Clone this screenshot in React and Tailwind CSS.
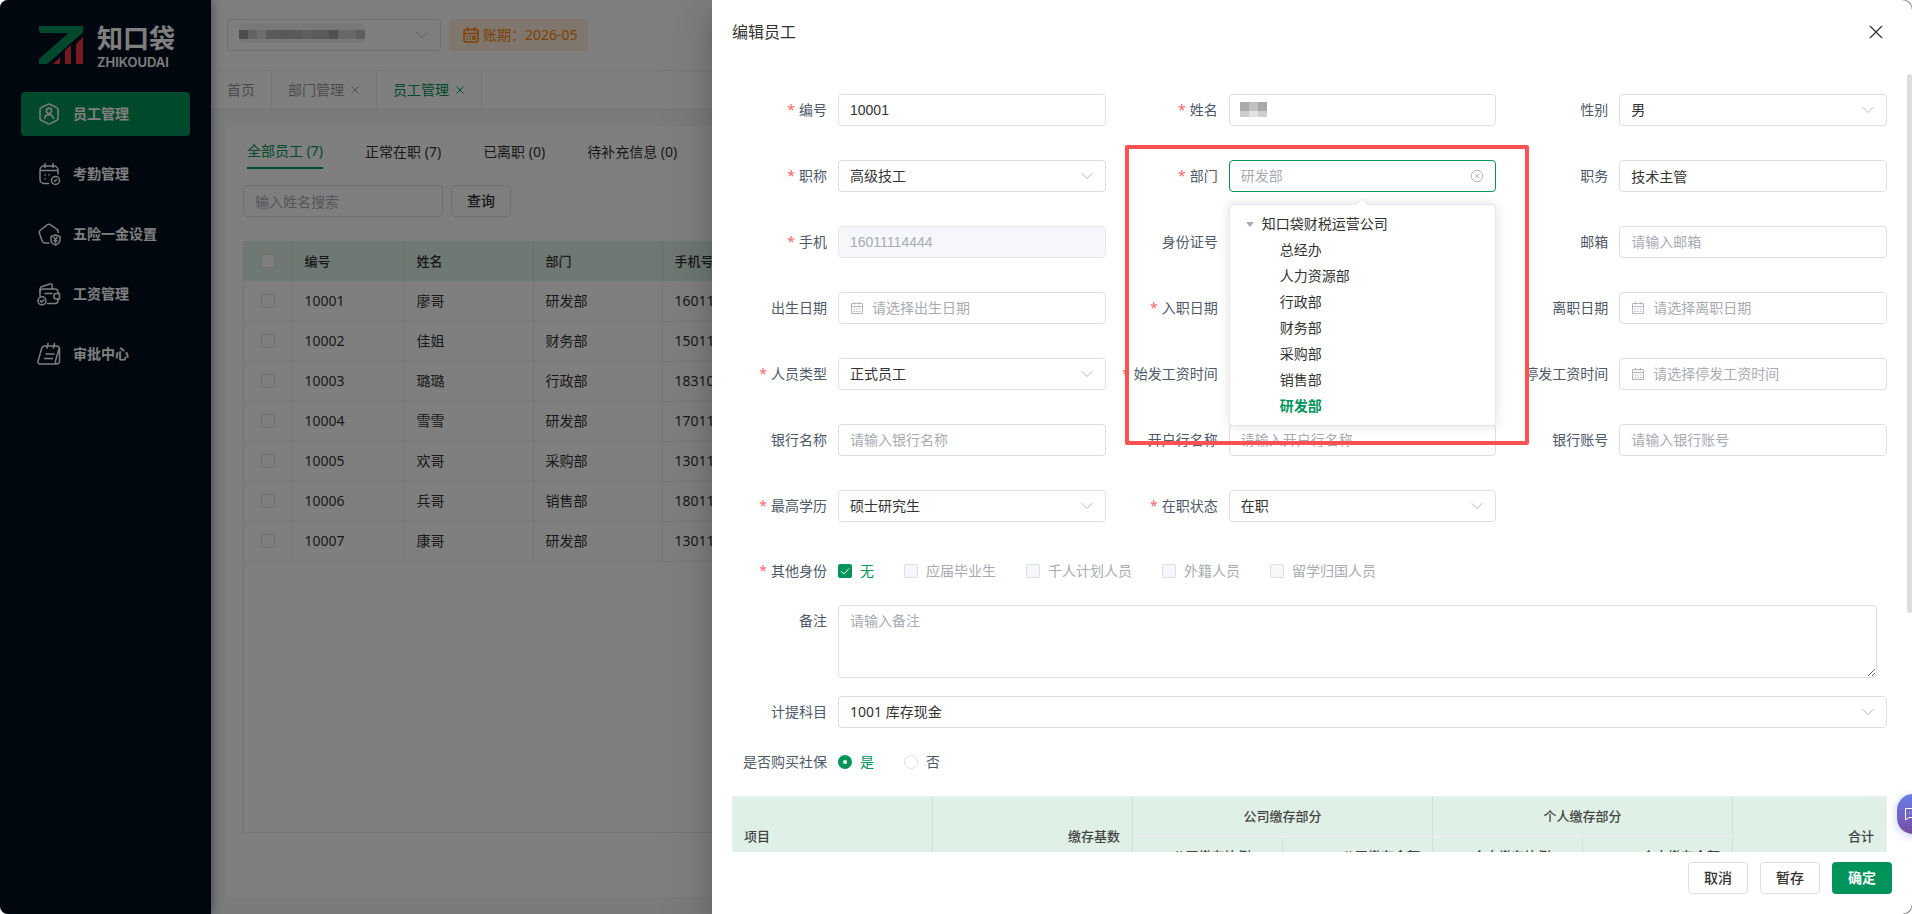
import { useState } from "react";

const menus = ["员工管理", "考勤管理", "五险一金设置", "工资管理", "审批中心"];

const employees = [
  ["10001", "廖哥", "研发部", "16011114444"],
  ["10002", "佳姐", "财务部", "15011112222"],
  ["10003", "璐璐", "行政部", "18310001111"],
  ["10004", "雪雪", "研发部", "17011113333"],
  ["10005", "欢哥", "采购部", "13011115555"],
  ["10006", "兵哥", "销售部", "18011116666"],
  ["10007", "康哥", "研发部", "13011117777"],
];

const departments = [
  "总经办",
  "人力资源部",
  "行政部",
  "财务部",
  "采购部",
  "销售部",
  "研发部",
];

const identities = ["无", "应届毕业生", "千人计划人员", "外籍人员", "留学归国人员"];

const Chevron = ({ className = "" }) => (
  <svg
    viewBox="0 0 14 14"
    className={`pointer-events-none absolute right-3 top-1/2 h-3.5 w-3.5 -translate-y-1/2 ${className}`}
    fill="none"
    stroke="#b4b7be"
    strokeLinecap="round"
    strokeLinejoin="round"
  >
    <path d="M2 4.5 7 9.5 12 4.5" />
  </svg>
);

const CalendarIcon = () => (
  <svg
    viewBox="0 0 14 14"
    className="pointer-events-none absolute left-3 top-1/2 h-3.5 w-3.5 -translate-y-1/2"
    fill="none"
    stroke="#b4b7be"
  >
    <path d="M1.5 2.5h11v10h-11zM1.5 5.5h11M4.5 1v2.500M9.500 1v2.500" />
    <path d="M3.500 8h1.500M6.200 8h1.500M9 8h1.500M3.500 10.500h1.500M6.200 10.500h1.500M9 10.500h1.500" />
  </svg>
);

const Logo = () => (
  <div className="flex items-start px-[39px] pt-[26px]">
    <svg viewBox="0 0 44 38" className="h-[38px] w-11 shrink-0">
      <path d="M0 0h44v6.500L8 38H0v-5L29.500 7H2L0 5z" fill="#00935a" />
      <path d="M15 38v-1l6-5.500V38z" fill="#ef3340" />
      <path d="M26 38V25.500c0-.8.500-1.500 1-2l5-4.500v19z" fill="#ef3340" />
      <path d="M37 38V20c0-1.500.500-2.500 1.500-3.500L44 11v27z" fill="#ef3340" />
    </svg>
    <div className="ml-3.5 whitespace-nowrap text-white">
      <div className="text-[26px] font-bold leading-6">知口袋</div>
      <div className="mt-1 font-['Inter',sans-serif] text-[13px] font-semibold leading-4">
        ZHIKOUDAI
      </div>
    </div>
  </div>
);

const MenuIcon = ({ index }) => (
  <svg
    viewBox="0 0 24 24"
    className="h-6 w-6 shrink-0"
    fill="none"
    stroke="currentColor"
    strokeWidth="1.500"
    strokeLinecap="round"
    strokeLinejoin="round"
  >
    {index === 0 && (
      <>
        <path d="M10.800 2.300a2.500 2.500 0 0 1 2.400 0l6.500 3.400A2.500 2.500 0 0 1 21 8v8a2.500 2.500 0 0 1-1.300 2.300l-6.500 3.400a2.500 2.500 0 0 1-2.400 0l-6.500-3.400A2.500 2.500 0 0 1 3 16V8a2.500 2.500 0 0 1 1.300-2.300z" />
        <circle cx="12" cy="8.800" r="2.600" />
        <path d="M7.500 16.500c.4-2.600 2.200-3.800 4.500-3.800s4.100 1.200 4.500 3.800" />
      </>
    )}
    {index === 1 && (
      <>
        <path d="M11.500 21.500H7a4 4 0 0 1-4-4V8a4 4 0 0 1 4-4h10a4 4 0 0 1 4 4v4M3 8.500h18M8 1.500v4M16 1.500v4" />
        <circle cx="18.500" cy="18.500" r="4" />
        <path d="m17.500 19.500 2-2M8 12.800v.1M12 12.800v.1M8 16.800v.1" />
      </>
    )}
    {index === 2 && (
      <>
        <path d="M12 21H8a3 3 0 0 1-3-2.500L2.500 11.500A3 3 0 0 1 3.500 8l6.800-5.200a3 3 0 0 1 3.400 0L19.500 7a4 4 0 0 1 1.800 3.500" />
        <path d="m18.500 13 4.500 1.500V18c0 2.500-2 4-4.500 5-2.500-1-4.500-2.500-4.500-5v-3.500z" />
        <path d="m17 15.500 1.500 2 1.500-2M18.500 17.500V21M17 18.800h3" />
      </>
    )}
    {index === 3 && (
      <>
        <path d="M10.500 21.500H18a3 3 0 0 0 3-3V17M21 11.500V10a3 3 0 0 0-3-3H6a3 3 0 0 0-3 3v4" />
        <path d="M3 9.500V7.500c0-1.500.600-2.600 2-3L13 2c1.200-.3 2.200.3 2.200 1.500V7M8 11.500h7" />
        <path d="M22.500 11.500h-3a2.700 2.700 0 0 0 0 5.400h3z" />
        <circle cx="5" cy="18.800" r="4" />
        <path d="m3.300 18.800 1.300 1.300 2.200-2.400" />
      </>
    )}
    {index === 4 && (
      <>
        <path d="M7.500 4H19.500a3 3 0 0 1 3 3v13M19 22H3a2 2 0 0 1-2-2.600L4.800 6A3 3 0 0 1 7.500 4M19 22c2 0 3.500-1 3.500-3M19 22c-1.200-1.500-.6-3 0-5l3-10M11 1.500 10 6M17.500 1.500l-1 4.500M9 12h8M7.500 16.500h8" />
      </>
    )}
  </svg>
);

const Sidebar = () => (
  <aside className="z-10 w-[211px] shrink-0 bg-[#000f1e] shadow-[2px_0_10px_rgba(0,0,0,0.35)]">
    <Logo />
    <nav className="mt-[22px] flex flex-col gap-4 px-[21px]">
      {menus.map((name, i) => (
        <a
          key={name}
          href="#"
          className={`flex h-11 items-center gap-3 whitespace-nowrap rounded pl-4 text-sm font-bold text-white ${
            i === 0 ? "bg-[#00935a]" : ""
          }`}
        >
          <MenuIcon index={i} />
          {name}
        </a>
      ))}
    </nav>
  </aside>
);

const TabClose = () => (
  <svg viewBox="0 0 10 10" className="h-2.5 w-2.5" fill="none" stroke="currentColor">
    <path d="m1.500 1.500 7 7M8.500 1.500l-7 7" />
  </svg>
);

const PageTabs = () => (
  <div className="flex h-10 border-b border-t border-[#e8eaee] bg-white text-sm text-[#999999]">
    <a href="#" className="flex items-center border-r border-[#e4e7ed] px-4">
      首页
    </a>
    <a href="#" className="flex items-center gap-1.5 border-r border-[#e4e7ed] px-4">
      部门管理
      <TabClose />
    </a>
    <a
      href="#"
      className="flex items-center gap-1.5 border-r border-[#e4e7ed] px-4 text-[#00935a]"
    >
      员工管理
      <TabClose />
    </a>
  </div>
);

const EmployeeTable = () => (
  <div className="mt-6 flex-1 border border-t-0 border-[#e4e7ed]">
    <table className="w-full table-fixed border-collapse text-left text-sm text-[#333333]">
      <colgroup>
        <col className="w-12" />
        <col className="w-28" />
        <col className="w-[129px]" />
        <col className="w-[129px]" />
        <col />
      </colgroup>
      <thead>
        <tr className="h-10 bg-[#dff0e6] text-[13px]">
          <th className="border-r border-[#d0e1d7] text-center">
            <input
              type="checkbox"
              aria-label="全选"
              className="block mx-auto h-3.5 w-3.5 appearance-none rounded-xs border border-[#dcdfe6] bg-white"
            />
          </th>
          {["编号", "姓名", "部门", "手机号码"].map((h) => (
            <th key={h} className="border-r border-[#d0e1d7] px-3 font-medium">
              {h}
            </th>
          ))}
        </tr>
      </thead>
      <tbody>
        {employees.map((row) => (
          <tr key={row[0]} className="h-10 border-b border-[#e9ebf2]">
            <td className="border-r border-[#e9ebf2]">
              <input
                type="checkbox"
                aria-label={row[1]}
                className="block mx-auto h-3.5 w-3.5 appearance-none rounded-xs border border-[#dcdfe6] bg-white"
              />
            </td>
            {row.map((cell) => (
              <td key={cell} className="border-r border-[#e9ebf2] px-3">
                {cell}
              </td>
            ))}
          </tr>
        ))}
      </tbody>
    </table>
  </div>
);

const maskCells = [
  "#9a9a9a", "#c4c4c4", "#dcdcdc", "#b4b4b4", "#b0aeb2", "#b0b0b0", "#b4b4b4",
  "#c0bfc0", "#b6b6b6", "#b6b6b6", "#a0a0a0", "#cecece", "#d0d0d0", "#bcbcc0",
];

const MainPage = () => (
  <div className="flex min-w-0 flex-1 flex-col bg-[#f5f7fa]">
    {/* Top bar */}
    <header className="flex h-[70px] items-center gap-2 bg-white px-4">
      <div className="relative h-8 w-[214px]">
        <select
          aria-label="公司"
          className="h-8 w-full appearance-none rounded border border-[#dcdfe6] bg-white"
        ></select>
        <svg viewBox="0 0 126 20" className="absolute left-3 top-1 h-5 w-[126px]">
          <rect width="126" height="20" rx="6" fill="#f0f0f0" />
          {maskCells.map((c, i) => (
            <rect key={i} x={i * 9} y="7" width="9" height="9" fill={c} />
          ))}
        </svg>
        <Chevron />
      </div>
      <div className="flex h-8 items-center gap-1 rounded bg-[#ffeedd] pl-3.5 pr-2.5 text-[#ff8000]">
        <svg
          viewBox="0 0 16 16"
          className="h-4 w-4"
          fill="none"
          stroke="currentColor"
          strokeWidth="1.500"
        >
          <rect x="1" y="2.500" width="14" height="12.500" rx="1.500" />
          <path d="M1 6.500h14M4.500 0v4.500M11.500 0v4.500M3.500 9.200H5M6.500 9.200H8M3.500 12H5M6.500 12H8" />
          <circle cx="11" cy="10.700" r="1.500" />
        </svg>
        <span className="text-sm">账期：2026-05</span>
      </div>
    </header>
    <PageTabs />

    {/* Employee list */}
    <main className="m-4 mb-[17px] flex flex-1 flex-col bg-white px-4 pb-16 pt-2">
      <div className="flex gap-[42px] px-1 text-sm text-[#333333]">
        <button className="h-[35px] border-b-2 border-[#00935a] text-[#00935a]">
          全部员工 (7)
        </button>
        <button>正常在职 (7)</button>
        <button>已离职 (0)</button>
        <button>待补充信息 (0)</button>
      </div>
      <div className="mt-4 flex gap-2">
        <input
          aria-label="输入姓名搜索"
          placeholder="输入姓名搜索"
          className="h-8 w-[200px] rounded border border-[#dcdfe6] px-[11px] text-sm placeholder:text-[#a8abb2]"
        />
        <button className="h-8 w-[60px] rounded border border-[#dcdfe6] text-sm font-medium text-[#333333]">
          查询
        </button>
      </div>
      <EmployeeTable />
    </main>
  </div>
);

const Field = ({ id, label, required, children }) => (
  <div className="flex items-center">
    <label
      htmlFor={id}
      className="flex w-[106px] shrink-0 justify-end gap-1 whitespace-nowrap pr-[11px] text-sm text-[#4e5969]"
    >
      {required && <span className="text-[#f56c6c]">*</span>}
      {label}
    </label>
    <div className="relative min-w-0 flex-1">{children}</div>
  </div>
);

const TextField = ({ id, label, required, ...props }) => (
  <Field id={id} label={label} required={required}>
    <input
      id={id}
      className="block h-8 w-full rounded border border-[#dcdfe6] bg-white px-[11px] font-['Liberation_Sans','Noto_Sans_CJK_SC',sans-serif] text-sm text-[#333333] placeholder:text-[#a8abb2] disabled:border-[#e4e7ed] disabled:bg-[#f5f7fa] disabled:text-[#a8abb2]"
      {...props}
    />
  </Field>
);

const DateField = ({ id, label, required, placeholder }) => (
  <Field id={id} label={label} required={required}>
    <input
      id={id}
      placeholder={placeholder}
      className="block h-8 w-full rounded border border-[#dcdfe6] bg-white pl-[33px] pr-3 font-['Liberation_Sans','Noto_Sans_CJK_SC',sans-serif] text-sm text-[#333333] placeholder:text-[#a8abb2]"
    />
    <CalendarIcon />
  </Field>
);

const SelectField = ({ id, label, required, value }) => (
  <Field id={id} label={label} required={required}>
    <select
      id={id}
      className="block h-8 w-full appearance-none rounded border border-[#dcdfe6] bg-white px-[11px] text-sm text-[#333333]"
    >
      <option>{value}</option>
    </select>
    <Chevron />
  </Field>
);

const DepartmentField = () => {
  const [current, setCurrent] = useState("研发部");

  return (
    <Field id="dept" label="部门" required>
      <input
        id="dept"
        placeholder={current}
        className="block h-8 w-full rounded border border-[#00935a] bg-white px-[11px] font-['Liberation_Sans','Noto_Sans_CJK_SC',sans-serif] text-sm placeholder:text-[#a8abb2]"
      />
      <svg
        viewBox="0 0 14 14"
        className="absolute right-3 top-1/2 h-3.5 w-3.5 -translate-y-1/2"
        fill="none"
        stroke="#b4b7be"
      >
        <circle cx="7" cy="7" r="5.700" />
        <path d="m5 5 4 4M9 5 5 9" />
      </svg>

      {/* Department tree */}
      <div className="absolute left-0 right-0 top-11 z-20 rounded border border-[#e4e7ed] bg-white py-1.5 text-sm text-[#333333] shadow-[0_0_12px_rgba(0,0,0,0.12)]">
        <div className="absolute -top-[5px] left-1/2 h-2.5 w-2.5 -translate-x-1/2 rotate-45 rounded-tl-xs border-l border-t border-[#e4e7ed] bg-white" />
        <div className="flex h-[26px] items-center pl-4">
          <svg viewBox="0 0 8 5" className="mr-2 h-[5px] w-2" fill="#a8abb2">
            <path d="M0 0h8L4 5z" />
          </svg>
          知口袋财税运营公司
        </div>
        {departments.map((name) => (
          <button
            key={name}
            type="button"
            onClick={() => setCurrent(name)}
            className={`flex h-[26px] w-full items-center pl-[50px] ${
              name === current ? "font-bold text-[#00935a]" : ""
            }`}
          >
            {name}
          </button>
        ))}
      </div>
    </Field>
  );
};

const InsuranceTable = () => (
  <table className="w-full table-fixed border-collapse border border-[#ebeef5] bg-[#dff0e6] text-[13px] text-[#444444]">
    <colgroup>
      <col className="w-[200px]" />
      <col className="w-[200px]" />
      <col className="w-[150px]" />
      <col className="w-[150px]" />
      <col className="w-[150px]" />
      <col className="w-[150px]" />
      <col />
    </colgroup>
    <thead>
      <tr className="h-10">
        <th rowSpan={2} className="border-r border-[#d0e1d7] px-[11px] text-left font-medium">
          项目
        </th>
        <th rowSpan={2} className="border-r border-[#d0e1d7] px-3 text-right font-medium">
          缴存基数
        </th>
        <th
          colSpan={2}
          className="border-b border-r border-b-[#ebeef5] border-r-[#d0e1d7] font-medium"
        >
          公司缴存部分
        </th>
        <th
          colSpan={2}
          className="border-b border-r border-b-[#ebeef5] border-r-[#d0e1d7] font-medium"
        >
          个人缴存部分
        </th>
        <th rowSpan={2} className="px-3 text-right font-medium">
          合计
        </th>
      </tr>
      <tr className="h-10">
        {["公司缴存比例(%)", "公司缴存金额", "个人缴存比例(%)", "个人缴存金额"].map((h) => (
          <th key={h} className="border-r border-[#d0e1d7] px-3 text-right font-medium">
            {h}
          </th>
        ))}
      </tr>
    </thead>
  </table>
);

const EmployeeForm = () => {
  const [insured, setInsured] = useState("是");

  return (
    <form className="pb-6 pl-5 pr-[25px] pt-5">
      <div className="grid grid-cols-3 gap-x-[17px] gap-y-[34px]">
        <TextField id="no" label="编号" required defaultValue="10001" />
        <Field id="name" label="姓名" required>
          <input
            id="name"
            className="block h-8 w-full rounded border border-[#dcdfe6] bg-white px-[11px] text-sm"
          />
          <svg viewBox="0 0 27 15" className="absolute left-[11px] top-2 h-[15px] w-[27px]">
            <rect width="9" height="9" fill="#a9a9a9" />
            <rect x="9" width="9" height="9" fill="#c0c0c0" />
            <rect x="18" width="9" height="9" fill="#a8a8a8" />
            <rect y="9" width="9" height="6" fill="#cccccc" />
            <rect x="9" y="9" width="9" height="6" fill="#e2e2e2" />
            <rect x="18" y="9" width="9" height="6" fill="#cfcfcf" />
          </svg>
        </Field>
        <SelectField id="gender" label="性别" value="男" />

        <SelectField id="title" label="职称" required value="高级技工" />
        <DepartmentField />
        <TextField id="post" label="职务" defaultValue="技术主管" />

        <TextField id="phone" label="手机" required disabled defaultValue="16011114444" />
        <TextField id="idcard" label="身份证号" />
        <TextField id="email" label="邮箱" placeholder="请输入邮箱" />

        <DateField id="birth" label="出生日期" placeholder="请选择出生日期" />
        <DateField id="entry" label="入职日期" required />
        <DateField id="leave" label="离职日期" placeholder="请选择离职日期" />

        <SelectField id="type" label="人员类型" required value="正式员工" />
        <DateField id="payStart" label="始发工资时间" required />
        <DateField id="payStop" label="停发工资时间" placeholder="请选择停发工资时间" />

        <TextField id="bank" label="银行名称" placeholder="请输入银行名称" />
        <TextField id="branch" label="开户行名称" placeholder="请输入开户行名称" />
        <TextField id="account" label="银行账号" placeholder="请输入银行账号" />

        <SelectField id="degree" label="最高学历" required value="硕士研究生" />
        <SelectField id="status" label="在职状态" required value="在职" />
      </div>

      {/* Identity */}
      <div className="mt-[33px] flex h-8 items-center text-sm">
        <span className="flex w-[106px] shrink-0 justify-end gap-1 pr-[11px] text-[#4e5969]">
          <span className="text-[#f56c6c]">*</span>
          其他身份
        </span>
        <div className="flex gap-[30px]">
          {identities.map((name, i) => (
            <label
              key={name}
              className={`relative flex items-center gap-2 ${
                i === 0 ? "text-[#00935a]" : "text-[#a8abb2]"
              }`}
            >
              <input
                type="checkbox"
                defaultChecked={i === 0}
                disabled={i !== 0}
                className="h-3.5 w-3.5 appearance-none rounded-xs border border-[#dcdfe6] bg-white checked:border-[#00935a] checked:bg-[#00935a] disabled:bg-[#f5f7fa]"
              />
              {i === 0 && (
                <svg
                  viewBox="0 0 14 14"
                  className="pointer-events-none absolute left-0 h-3.5 w-3.5"
                  fill="none"
                  stroke="#ffffff"
                >
                  <path d="m3 7.200 2.800 2.800 5.200-5.500" />
                </svg>
              )}
              {name}
            </label>
          ))}
        </div>
      </div>

      <div className="mt-[18px] flex pr-2.5">
        <label
          htmlFor="remark"
          className="w-[106px] shrink-0 pr-[11px] text-right text-sm leading-8 text-[#4e5969]"
        >
          备注
        </label>
        <textarea
          id="remark"
          placeholder="请输入备注"
          className="block h-[73px] flex-1 resize-y rounded border border-[#dcdfe6] px-[11px] py-[5px] text-sm placeholder:text-[#a8abb2]"
        />
      </div>

      <div className="mt-[18px]">
        <SelectField id="subject" label="计提科目" value="1001 库存现金" />
      </div>

      <div className="mt-[18px] flex h-8 items-center text-sm text-[#4e5969]">
        <span className="flex w-[106px] shrink-0 justify-end pr-[11px]">是否购买社保</span>
        <div className="flex gap-[30px]">
          {["是", "否"].map((v) => (
            <label
              key={v}
              className={`flex items-center gap-2 ${insured === v ? "text-[#00935a]" : ""}`}
            >
              <input
                type="radio"
                name="insured"
                checked={insured === v}
                onChange={() => setInsured(v)}
                className="h-3.5 w-3.5 appearance-none rounded-full border border-[#dcdfe6] bg-white checked:border-[5px] checked:border-[#00935a]"
              />
              {v}
            </label>
          ))}
        </div>
      </div>

      <div className="mt-[18px]">
        <InsuranceTable />
      </div>
    </form>
  );
};

const Drawer = () => (
  <section className="absolute inset-y-0 right-0 flex w-[1200px] max-w-full flex-col rounded-r-[10px] bg-white shadow-[0_16px_48px_16px_rgba(0,0,0,0.08),0_12px_32px_rgba(0,0,0,0.12),0_8px_16px_-8px_rgba(0,0,0,0.16)]">
    <header className="flex h-[74px] shrink-0 items-start justify-between px-5 pt-5">
      <h2 className="text-base leading-6 text-[#333333]">编辑员工</h2>
      <button aria-label="关闭" className="flex h-6 w-8 items-center justify-center">
        <svg
          viewBox="0 0 14 14"
          className="h-3.5 w-3.5"
          fill="none"
          stroke="#303133"
          strokeWidth="1.200"
        >
          <path d="m1 1 12 12M13 1 1 13" />
        </svg>
      </button>
    </header>

    <div className="relative min-h-0 flex-1">
      <div className="h-full overflow-y-auto [scrollbar-width:none]">
        <EmployeeForm />
      </div>
      <div className="absolute right-0 top-0 h-[539px] w-[5px] rounded-full bg-[#dddee0]" />
    </div>

    <footer className="flex h-[62px] shrink-0 gap-3 px-5 pt-2.5 justify-end text-sm font-medium text-[#333333]">
      <button className="h-8 w-[60px] rounded border border-[#dcdfe6] bg-white">取消</button>
      <button className="h-8 w-[60px] rounded border border-[#dcdfe6] bg-white">暂存</button>
      <button className="h-8 w-[60px] rounded bg-[#00935a] font-bold text-white">确定</button>
    </footer>

    {/* Highlight frame around the department picker */}
    <div className="pointer-events-none absolute left-[413px] top-[145px] z-30 h-[300px] w-[404px] rounded-xs border-4 border-[#ff5152]" />
  </section>
);

const App = () => {
  return (
    <div className="relative flex h-screen min-h-[700px] overflow-hidden rounded-lg font-['Noto_Sans','Noto_Sans_CJK_SC',sans-serif]">
      <Sidebar />
      <MainPage />
      <div className="absolute inset-0 z-20 bg-black/50">
        <Drawer />
      </div>

      {/* Support chat */}
      <button
        aria-label="客服"
        className="absolute -right-[33px] bottom-20 z-30 flex h-10 w-12 items-center rounded-2xl bg-linear-to-b from-[#667eea] to-[#764ba2] pl-2 shadow-[0_2px_10px_rgba(102,126,234,0.4)]"
      >
        <svg
          viewBox="0 0 14 14"
          className="h-3.5 w-3.5"
          fill="none"
          stroke="#ffffff"
          strokeLinejoin="round"
        >
          <path d="M.5 1.500h13v9H4l-3.500 2.500zM4 6h.8M6.600 6h.8M9.200 6h.8" />
        </svg>
      </button>
    </div>
  );
};

export default App;
